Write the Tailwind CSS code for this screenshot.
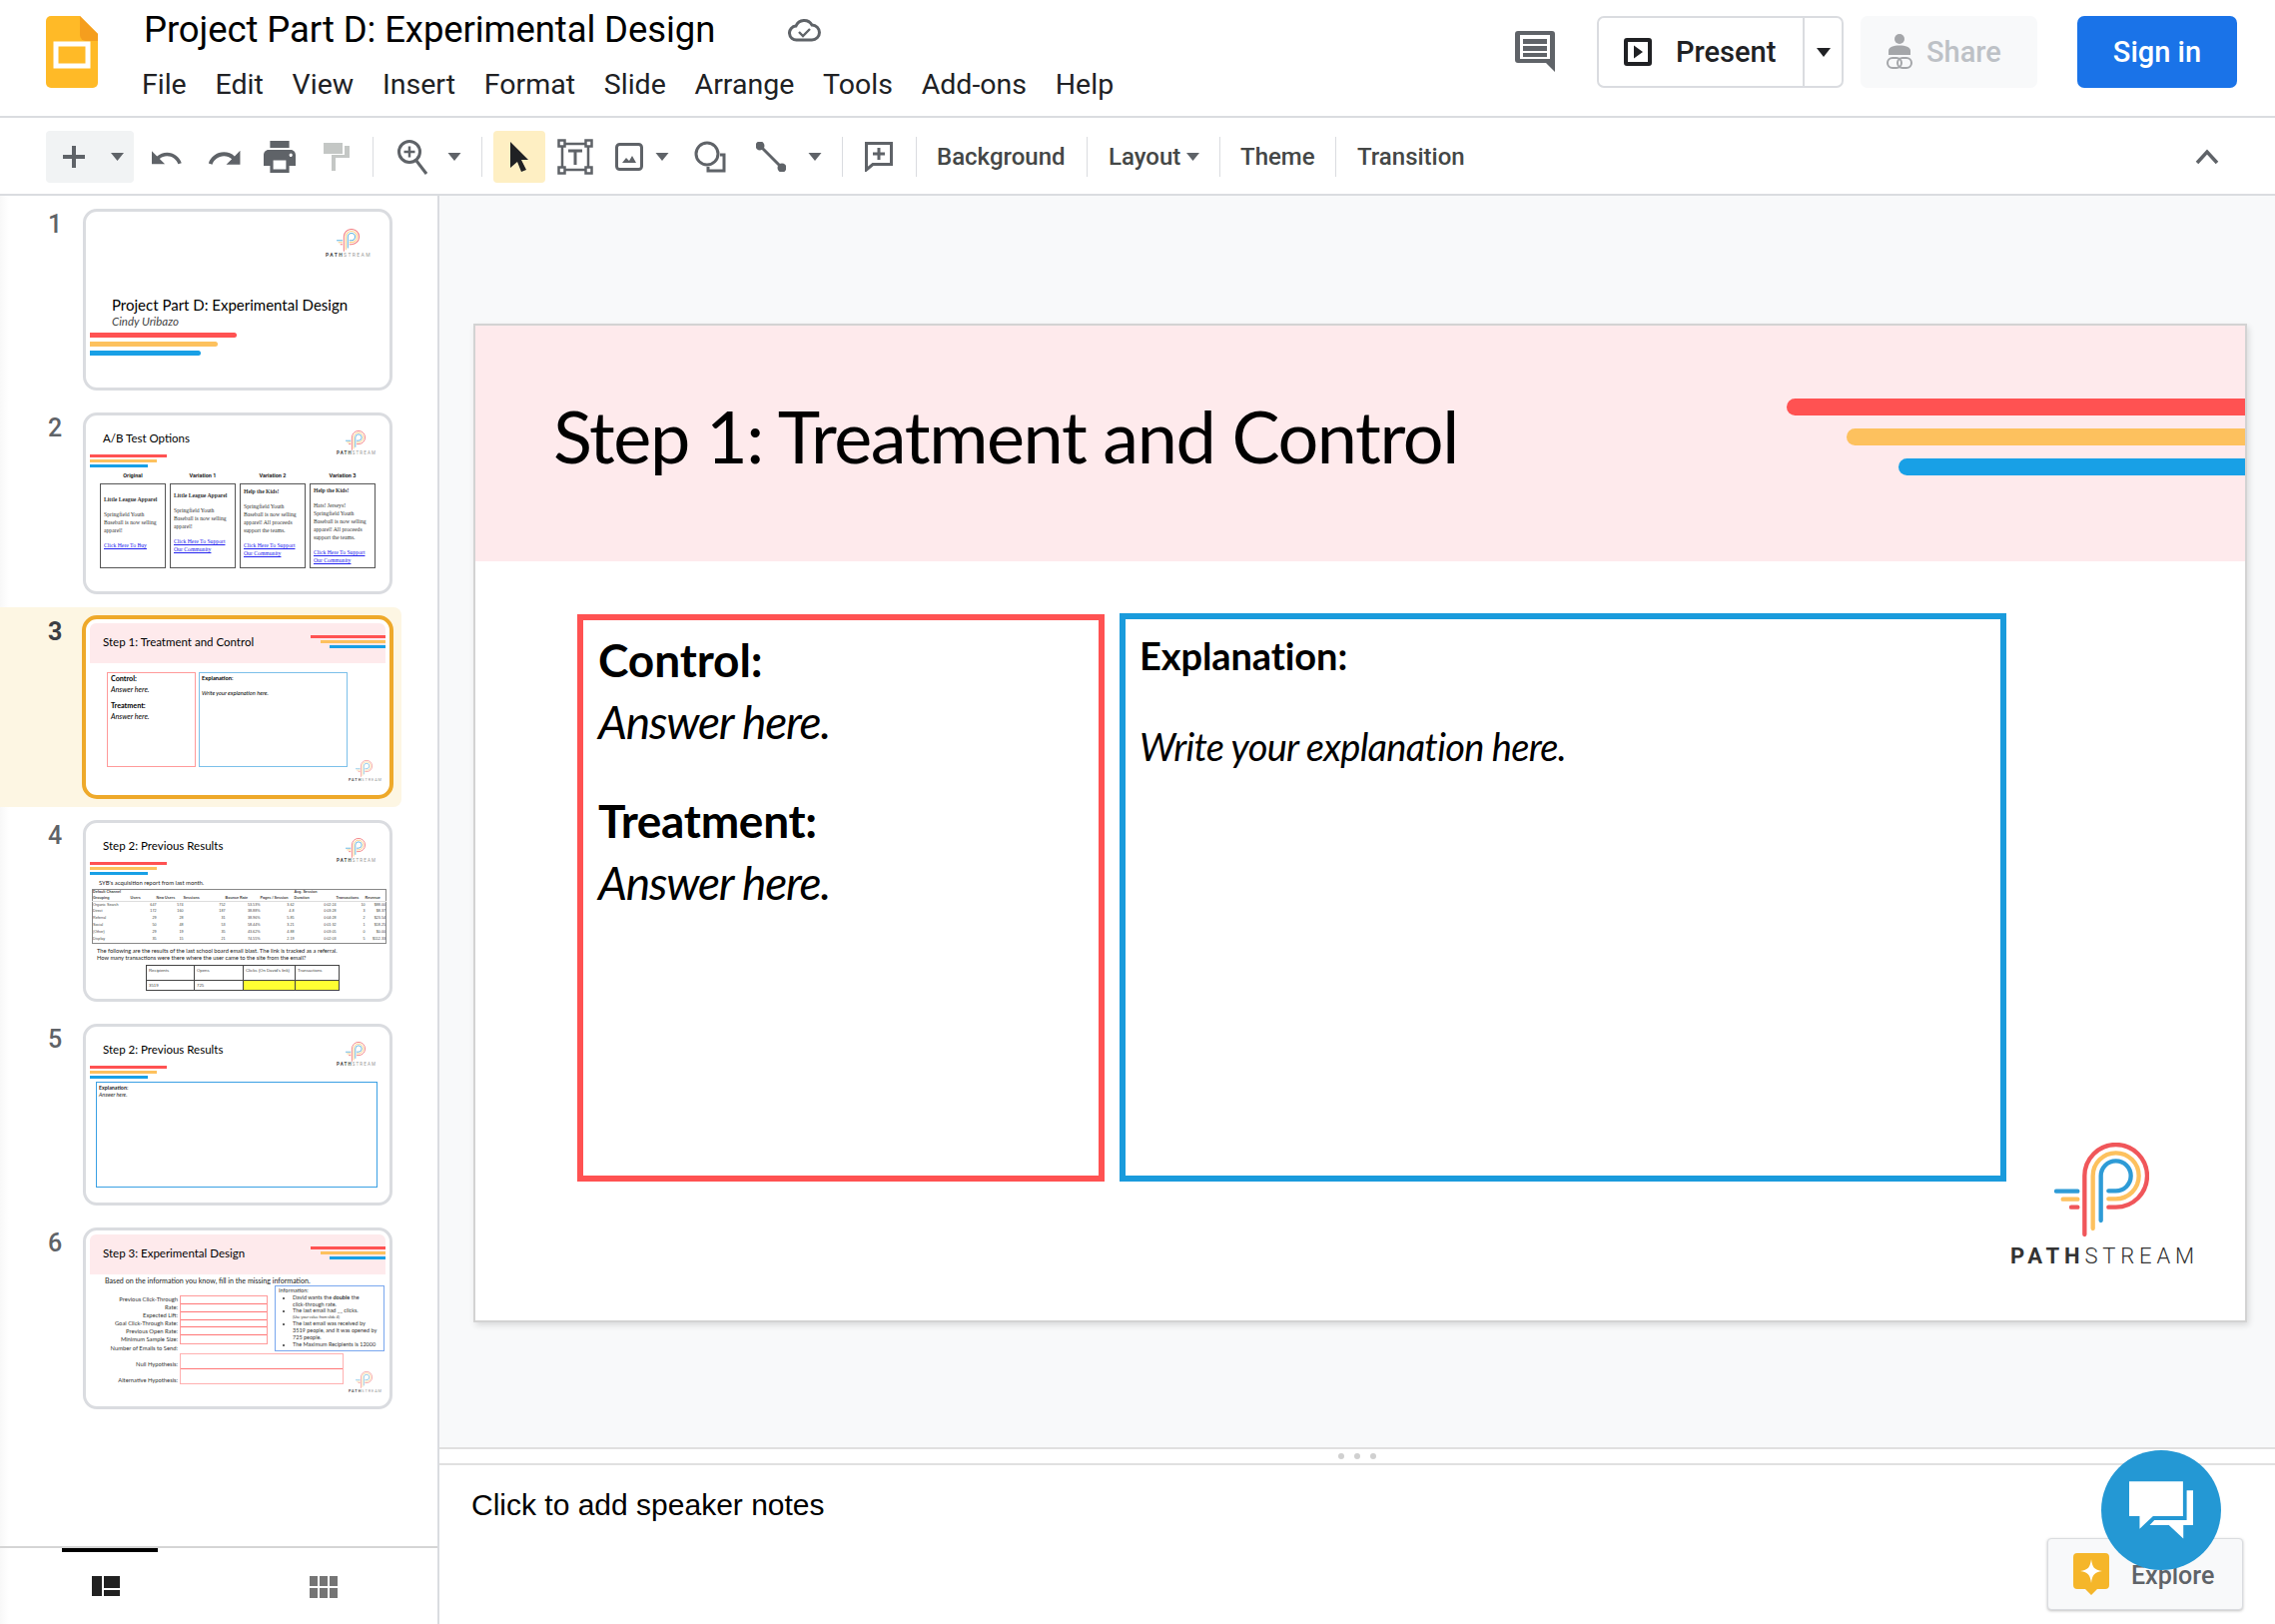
<!DOCTYPE html>
<html lang="en">
<head>
<meta charset="utf-8">
<title>Project Part D: Experimental Design</title>
<script src="https://cdn.jsdelivr.net/npm/@tailwindcss/browser@4"></script>
</head>
<body class="w-[2278px] h-[1626px] overflow-hidden bg-white font-['Roboto',sans-serif] text-[#202124] relative">
<svg class="absolute w-0 h-0">
  <defs>
    <symbol id="pm" viewBox="320 130 285 285">
      <g fill="none" stroke-width="13" stroke-linecap="round">
        <path stroke="#f0565a" d="M411 406V230A94 94 0 0 1 505 136A94 94 0 0 1 505 324H483M371 324H390"/>
        <path stroke="#fdc15e" d="M436 388V230A69 69 0 0 1 505 161A69 69 0 0 1 505 299H483M346 300H390"/>
        <path stroke="#2e9bd6" d="M460 364V230A45 45 0 0 1 505 185A45 45 0 0 1 505 275H483M326 276H390"/>
      </g>
    </symbol>
  </defs>
</svg>

<!-- HEADER -->
<header class="h-[118px] border-b-2 border-[#dadce0] flex items-start bg-white">
  <svg class="ml-[46px] mt-[16px] w-[52px] h-[72px] shrink-0" viewBox="0 0 52 72">
    <path fill="#ffba27" d="M5 0H34L52 18V67a5 5 0 0 1-5 5H5a5 5 0 0 1-5-5V5a5 5 0 0 1 5-5z"/>
    <path fill="#f59e1e" d="M34 0L52 18V25H40a6 6 0 0 1-6-6z"/>
    <rect x="10" y="28" width="32" height="22" fill="none" stroke="#fff" stroke-width="5"/>
  </svg>
  <div class="ml-[46px] flex flex-col">
    <div class="flex items-center mt-[9px] h-[42px]">
      <h1 class="text-[36.500px] leading-[42px] font-normal text-black w-[645px] whitespace-nowrap tracking-[-0.1px]">Project Part D: Experimental Design</h1>
      <svg class="w-[33px] h-[24px]" viewBox="0 0 33 24" fill="none" stroke="#5f6368" stroke-width="3"><path d="M9 22a7 7 0 0 1-1-14A9 9 0 0 1 24 7a7.5 7.5 0 0 1 0 15z"/><path stroke-width="2.4" d="M11 14l4 4 7-7"/></svg>
    </div>
    <nav class="flex gap-[28.800px] mt-[16px] text-[28.500px] leading-[36px] text-[#202124] -ml-[2px]">
      <span>File</span><span>Edit</span><span>View</span><span>Insert</span><span>Format</span><span>Slide</span><span>Arrange</span><span>Tools</span><span>Add-ons</span><span>Help</span>
    </nav>
  </div>
  <div class="ml-auto pr-[38px] pt-[16px] flex items-start">
    <svg class="mt-[15px] w-[40px] h-[41px]" viewBox="0 0 40 41"><path fill="#5f6368" d="M3 0H37a3 3 0 0 1 3 3V41L31 32H3a3 3 0 0 1-3-3V3a3 3 0 0 1 3-3z"/><path fill="#fff" d="M5 4H35V28H5z"/><path fill="#5f6368" d="M8 8H32V13H8zM8 15H32V20H8zM8 22H32V26H8z"/></svg>
    <div class="ml-[42px] w-[247px] h-[72px] border-2 border-[#dadce0] rounded-[7px] flex items-center">
      <svg class="ml-[25px] w-[28px] h-[28px]" viewBox="0 0 28 28"><path fill="#202124" fill-rule="evenodd" d="M3 0H25a3 3 0 0 1 3 3V25a3 3 0 0 1-3 3H3a3 3 0 0 1-3-3V3a3 3 0 0 1 3-3zM4 4V24H24V4zM10 7.500L19 14 10 20.500z"/></svg>
      <span class="ml-[24px] w-[103px] text-[29px] font-medium leading-none whitespace-nowrap">Present</span>
      <div class="ml-[24px] h-full border-l-2 border-[#dadce0] flex-1 flex items-center justify-center">
        <svg class="w-[14px] h-[9px]" viewBox="0 0 14 9"><path fill="#202124" d="M0 0H14L7 9z"/></svg>
      </div>
    </div>
    <div class="ml-[17px] w-[177px] h-[72px] bg-[#f8f9fa] rounded-[7px] flex items-center">
      <svg class="ml-[26px] w-[26px] h-[36px]" viewBox="0 0 26 36"><circle cx="13" cy="5" r="5" fill="#a4a6a9"/><path fill="#a4a6a9" d="M2 21V17c0-4 5-5.500 11-5.500S24 13 24 17v4z"/><g fill="none" stroke="#a4a6a9" stroke-width="2"><rect x="1" y="24" width="14" height="10" rx="5"/><rect x="11" y="24" width="14" height="10" rx="5"/></g></svg>
      <span class="ml-[14px] text-[29px] font-medium text-[#bdc1c6] leading-none">Share</span>
    </div>
    <div class="ml-[40px] w-[160px] h-[72px] bg-[#1a73e8] rounded-[7px] flex items-center justify-center text-white text-[29px] font-medium leading-none">Sign in</div>
  </div>
</header>

<!-- TOOLBAR -->
<div class="h-[78px] border-b-2 border-[#dadce0] flex items-center pl-[46px] pt-[2px] text-[#444746] shrink-0">
  <div class="w-[88px] h-[52px] bg-[#f1f3f4] rounded-[4px] flex items-center shrink-0">
    <svg class="ml-[17px] w-[22px] h-[22px]" viewBox="0 0 22 22"><path fill="#5f6368" d="M9 0h4v9h9v4h-9v9H9v-9H0V9h9z"/></svg>
    <svg class="ml-[26px] w-[13px] h-[8px]" viewBox="0 0 13 8"><path fill="#5f6368" d="M0 0H13L6.500 8z"/></svg>
  </div>
  <svg class="ml-[18px] w-[32px] h-[32px]" viewBox="2 4 22 14" preserveAspectRatio="xMidYMid meet"><path fill="#5f6368" d="M12.500 8c-2.650 0-5.050.99-6.900 2.600L2 7v9h9l-3.620-3.620c1.390-1.160 3.160-1.880 5.120-1.880 3.540 0 6.550 2.310 7.600 5.500l2.370-.78C21.080 11.030 17.150 8 12.500 8z"/></svg>
  <svg class="ml-[24px] w-[34px] h-[32px]" viewBox="1 4 22 14"><path fill="#5f6368" d="M18.400 10.600C16.550 8.990 14.150 8 11.500 8c-4.650 0-8.580 3.030-9.960 7.220L3.900 16c1.050-3.190 4.050-5.500 7.600-5.500 1.950 0 3.730.72 5.120 1.880L13 16h9V7l-3.600 3.600z"/></svg>
  <svg class="ml-[22px] w-[32px] h-[32px]" viewBox="2 3 20 18" preserveAspectRatio="none"><path fill="#5f6368" d="M19 8H5c-1.660 0-3 1.340-3 3v6h4v4h12v-4h4v-6c0-1.660-1.340-3-3-3zm-3 11H8v-5h8v5zm3-7c-.55 0-1-.45-1-1s.45-1 1-1 1 .45 1 1-.45 1-1 1zm-1-9H6v4h12V3z"/></svg>
  <svg class="ml-[28px] w-[26px] h-[28px]" viewBox="0 0 26 28"><path fill="#c4c7c5" d="M0 0H19V11H0zM21 3H26V15H12V28H8V12H21z"/></svg>
  <div class="ml-[23px] w-[1px] h-[40px] bg-[#dadce0]"></div>
  <svg class="ml-[23px] w-[32px] h-[36px]" viewBox="0 0 32 36" fill="none" stroke="#5f6368"><circle cx="13" cy="13" r="10.500" stroke-width="3"/><path stroke-width="3" d="M20 22l10 13"/><path stroke-width="2.500" d="M13 7.500v11M7.500 13h11"/></svg>
  <svg class="ml-[19px] w-[14px] h-[8px]" viewBox="0 0 13 8"><path fill="#5f6368" d="M0 0H13L6.500 8z"/></svg>
  <div class="ml-[20px] w-[1px] h-[40px] bg-[#dadce0]"></div>
  <div class="ml-[11px] w-[52px] h-[52px] bg-[#feefc3] rounded-[4px] flex items-center justify-center shrink-0">
    <svg class="w-[20px] h-[30px]" viewBox="0 0 20 30"><path fill="#202124" d="M1 0L19 18H12L17 28 12 30 8 20 1 26z"/></svg>
  </div>
  <svg class="ml-[12px] w-[36px] h-[36px]" viewBox="0 0 36 36" fill="none" stroke="#5f6368" stroke-width="2.500"><path d="M5 5H31V31H5z"/><g fill="#fff"><rect x="1.500" y="1.500" width="6" height="6"/><rect x="28.500" y="1.500" width="6" height="6"/><rect x="1.500" y="28.500" width="6" height="6"/><rect x="28.500" y="28.500" width="6" height="6"/></g><path stroke-width="3" d="M11 12H25M18 12V26"/></svg>
  <svg class="ml-[22px] w-[28px] h-[28px]" viewBox="0 0 28 28"><rect x="1.500" y="1.500" width="25" height="25" rx="3" fill="none" stroke="#5f6368" stroke-width="3"/><path fill="#5f6368" d="M7 20l4-5 3 3 3-5 4 7z"/></svg>
  <svg class="ml-[12px] w-[14px] h-[8px]" viewBox="0 0 13 8"><path fill="#5f6368" d="M0 0H13L6.500 8z"/></svg>
  <svg class="ml-[25px] w-[32px] h-[32px]" viewBox="0 0 32 32" fill="none" stroke="#5f6368" stroke-width="3"><circle cx="13" cy="13" r="11"/><path d="M26 14H30V30H14V26"/></svg>
  <svg class="ml-[30px] w-[30px] h-[30px]" viewBox="0 0 30 30" fill="none" stroke="#5f6368" stroke-width="3"><path d="M4 4L26 26"/><circle cx="4" cy="4" r="3" fill="#5f6368"/><circle cx="26" cy="26" r="3" fill="#5f6368"/></svg>
  <svg class="ml-[22px] w-[14px] h-[8px]" viewBox="0 0 13 8"><path fill="#5f6368" d="M0 0H13L6.500 8z"/></svg>
  <div class="ml-[20px] w-[1px] h-[40px] bg-[#dadce0]"></div>
  <svg class="ml-[22px] w-[28px] h-[30px]" viewBox="0 0 28 30" fill="none" stroke="#5f6368"><path stroke-width="3" d="M1.500 1.500H26.500V22.500H8L1.500 28z"/><path stroke-width="3" d="M14 6v12M8 12h12"/></svg>
  <div class="ml-[23px] w-[1px] h-[40px] bg-[#dadce0]"></div>
  <span class="ml-[20px] w-[130px] text-[24px] font-medium whitespace-nowrap">Background</span>
  <div class="ml-[20px] w-[1px] h-[40px] bg-[#dadce0]"></div>
  <span class="ml-[21px] w-[76px] text-[24px] font-medium whitespace-nowrap">Layout</span>
  <svg class="ml-[1px] w-[15px] h-[8px]" viewBox="0 0 13 8"><path fill="#5f6368" d="M0 0H13L6.500 8z"/></svg>
  <div class="ml-[19px] w-[1px] h-[40px] bg-[#dadce0]"></div>
  <span class="ml-[20px] w-[75px] text-[24px] font-medium whitespace-nowrap">Theme</span>
  <div class="ml-[20px] w-[1px] h-[40px] bg-[#dadce0]"></div>
  <span class="ml-[21px] text-[24px] font-medium whitespace-nowrap">Transition</span>
  <svg class="ml-auto mr-[56px] w-[24px] h-[16px]" viewBox="0 0 24 16" fill="none" stroke="#5f6368" stroke-width="3.500"><path d="M2 14L12 3 22 14"/></svg>
</div>

<!-- MAIN -->
<div class="flex h-[1430px]">
  <!-- SIDEBAR -->
  <aside class="w-[440px] shrink-0 border-r-2 border-[#dadce0] flex flex-col bg-gradient-to-r from-[#f8f8f8] from-0% to-white to-[2%]">
    <div class="flex-1 pt-[13px]">

      <!-- 1 -->
      <div class="h-[204px] flex items-start">
        <div class="w-[83px] pl-[48px] pt-[2px] text-[25px] leading-[28px] font-medium text-[#5f6368]">1</div>
        <div class="relative w-[310px] h-[182px] border-[3px] border-[#dadce0] rounded-[14px] bg-white overflow-hidden font-[Lato]">
          <div class="absolute left-[26px] top-[84px] text-[15px] leading-[18px] text-black whitespace-nowrap">Project Part D: Experimental Design</div>
          <div class="absolute left-[26px] top-[102px] text-[11.500px] leading-[16px] italic text-[#444] whitespace-nowrap">Cindy Uribazo</div>
          <div class="absolute left-[4px] top-[121px] w-[147px] h-[5px] rounded-r-full bg-[#ff5252]"></div>
          <div class="absolute left-[4px] top-[130px] w-[128px] h-[5px] rounded-r-full bg-[#fdc15e]"></div>
          <div class="absolute left-[4px] top-[139px] w-[111px] h-[5px] rounded-r-full bg-[#18a0e6]"></div>
          <svg class="absolute left-[251px] top-[17px] w-[23px] h-[23px] opacity-75"><use href="#pm"/></svg>
          <div class="absolute left-[240px] top-[40px] text-[5px] leading-[7px] tracking-[0.28em] text-[#999] whitespace-nowrap font-['Roboto']"><b class="text-[#444]">PATH</b>STREAM</div>
        </div>
      </div>

      <!-- 2 -->
      <div class="h-[204px] flex items-start">
        <div class="w-[83px] pl-[48px] pt-[2px] text-[25px] leading-[28px] font-medium text-[#5f6368]">2</div>
        <div class="relative w-[310px] h-[182px] border-[3px] border-[#dadce0] rounded-[14px] bg-white overflow-hidden font-[Lato]">
          <div class="absolute left-[17px] top-[15px] text-[11.500px] leading-[16px] text-black whitespace-nowrap">A/B Test Options</div>
          <div class="absolute left-[4px] top-[39px] w-[77px] h-[3px] bg-[#ff5252]"></div>
          <div class="absolute left-[4px] top-[44px] w-[67px] h-[3px] bg-[#fdc15e]"></div>
          <div class="absolute left-[4px] top-[49px] w-[58px] h-[3px] bg-[#18a0e6]"></div>
          <svg class="absolute left-[260px] top-[15px] w-[20px] h-[20px] opacity-75"><use href="#pm"/></svg>
          <div class="absolute left-[251px] top-[35px] text-[4.500px] leading-[6px] tracking-[0.25em] text-[#999] whitespace-nowrap font-['Roboto']"><b class="text-[#444]">PATH</b>STREAM</div>
          <div class="absolute left-[14px] top-[57px] w-[276px] grid grid-cols-4 gap-x-[4px] text-center text-[5.500px] leading-[7px] font-bold text-[#222] font-[Roboto]">
            <span>Original</span><span>Variation 1</span><span>Variation 2</span><span>Variation 3</span>
          </div>
          <div class="absolute left-[14px] top-[68px] w-[276px] h-[85px] grid grid-cols-4 gap-x-[4px] font-['Liberation_Serif',serif] text-[5.700px] leading-[8px] text-[#333] whitespace-nowrap">
            <div class="border border-[#555] px-[3px] pt-[11px]"><p class="font-bold">Little League Apparel</p><p class="mt-[7px]">Springfield Youth<br>Baseball is now selling<br>apparel!</p><p class="mt-[7px] text-[#2222ee] underline">Click Here To Buy</p></div>
            <div class="border border-[#555] px-[3px] pt-[7px]"><p class="font-bold">Little League Apparel</p><p class="mt-[7px]">Springfield Youth<br>Baseball is now selling<br>apparel!</p><p class="mt-[7px] text-[#2222ee] underline">Click Here To Support<br>Our Community</p></div>
            <div class="border border-[#555] px-[3px] pt-[3px]"><p class="font-bold">Help the Kids!</p><p class="mt-[7px]">Springfield Youth<br>Baseball is now selling<br>apparel! All proceeds<br>support the teams.</p><p class="mt-[7px] text-[#2222ee] underline">Click Here To Support<br>Our Community</p></div>
            <div class="border border-[#555] px-[3px] pt-[2px]"><p class="font-bold">Help the Kids!</p><p class="mt-[7px]">Hats! Jerseys!<br>Springfield Youth<br>Baseball is now selling<br>apparel! All proceeds<br>support the teams.</p><p class="mt-[7px] text-[#2222ee] underline">Click Here To Support<br>Our Community</p></div>
          </div>
        </div>
      </div>

      <!-- 3 -->
      <div class="relative h-[204px] flex items-start">
        <div class="absolute left-0 top-[-9px] w-[402px] h-[200px] bg-[#fdf6e3] rounded-r-[8px]"></div>
        <div class="relative w-[82px] pl-[48px] pt-[2px] text-[25px] leading-[28px] font-bold text-[#3c4043]">3</div>
        <div class="relative -mt-[1px] w-[312px] h-[184px] border-[4px] border-[#eea92a] rounded-[15px] bg-white overflow-hidden font-[Lato]">
          <div class="absolute left-0 top-[4px] w-[304px] h-[40px] px-[4px]"><div class="h-full bg-[#feeaec] rounded-t-[6px]"></div></div>
          <div class="absolute left-[17px] top-[15px] text-[11.500px] leading-[16px] text-black whitespace-nowrap">Step 1: Treatment and Control</div>
          <div class="absolute left-[225px] top-[16px] w-[75px] h-[3px] bg-[#ff5252]"></div>
          <div class="absolute left-[235px] top-[21px] w-[65px] h-[3px] bg-[#fdc15e]"></div>
          <div class="absolute left-[244px] top-[26px] w-[56px] h-[3px] bg-[#18a0e6]"></div>
          <div class="absolute left-[21px] top-[53px] w-[89px] h-[95px] border border-[#ff9a9a] px-[3px] pt-[1px] text-[7.200px] leading-[10.500px] text-black"><b>Control:</b><br><i>Answer here.</i><div class="h-[6px]"></div><b>Treatment:</b><br><i>Answer here.</i></div>
          <div class="absolute left-[113px] top-[53px] w-[149px] h-[95px] border border-[#7cc0ea] px-[2px] pt-[1px] text-[5.700px] leading-[8px] text-black"><b>Explanation:</b><div class="h-[7px]"></div><i>Write your explanation here.</i></div>
          <svg class="absolute left-[270px] top-[141px] w-[17px] h-[17px] opacity-60"><use href="#pm"/></svg>
          <div class="absolute left-[263px] top-[158px] text-[3.800px] leading-[6px] tracking-[0.25em] text-[#999] whitespace-nowrap font-['Roboto']"><b class="text-[#555]">PATH</b>STREAM</div>
        </div>
      </div>

      <!-- 4 -->
      <div class="h-[204px] flex items-start">
        <div class="w-[83px] pl-[48px] pt-[2px] text-[25px] leading-[28px] font-medium text-[#5f6368]">4</div>
        <div class="relative w-[310px] h-[182px] border-[3px] border-[#dadce0] rounded-[14px] bg-white overflow-hidden font-[Lato]">
          <div class="absolute left-[17px] top-[15px] text-[11.500px] leading-[16px] text-black whitespace-nowrap">Step 2: Previous Results</div>
          <div class="absolute left-[4px] top-[39px] w-[77px] h-[3px] bg-[#ff5252]"></div>
          <div class="absolute left-[4px] top-[44px] w-[67px] h-[3px] bg-[#fdc15e]"></div>
          <div class="absolute left-[4px] top-[49px] w-[58px] h-[3px] bg-[#18a0e6]"></div>
          <svg class="absolute left-[260px] top-[15px] w-[20px] h-[20px] opacity-75"><use href="#pm"/></svg>
          <div class="absolute left-[251px] top-[35px] text-[4.500px] leading-[6px] tracking-[0.25em] text-[#999] whitespace-nowrap font-['Roboto']"><b class="text-[#444]">PATH</b>STREAM</div>
          <div class="absolute left-[13px] top-[56px] text-[5.900px] leading-[8px] text-[#222] whitespace-nowrap">SYB's acquisition report from last month.</div>
          <table class="absolute left-[6px] top-[66px] w-[294px] table-fixed border-collapse border border-[#888] font-['Liberation_Sans',sans-serif] text-[3.700px] leading-[5.500px] text-[#444]">
            <colgroup><col class="w-[38px]"><col class="w-[26px]"><col class="w-[27px]"><col class="w-[42px]"><col class="w-[35px]"><col class="w-[34px]"><col class="w-[42px]"><col class="w-[29px]"><col class="w-[21px]"></colgroup>
            <tr class="h-[12px] font-bold align-bottom border-b border-[#ddd] whitespace-nowrap"><td>Default Channel<br>Grouping</td><td>Users</td><td>New Users</td><td>Sessions</td><td>Bounce Rate</td><td>Pages / Session</td><td>Avg. Session<br>Duration</td><td>Transactions</td><td>Revenue</td></tr>
            <tr class="h-[7px] text-right"><td class="text-left">Organic Search</td><td>647</td><td>574</td><td>752</td><td>53.53%</td><td>3.62</td><td>0:02:24</td><td>10</td><td>$88.00</td></tr>
            <tr class="h-[7px] text-right"><td class="text-left">Direct</td><td>172</td><td>160</td><td>187</td><td>38.88%</td><td>4.8</td><td>0:03:28</td><td>3</td><td>$8.37</td></tr>
            <tr class="h-[7px] text-right"><td class="text-left">Referral</td><td>29</td><td>28</td><td>31</td><td>38.96%</td><td>5.85</td><td>0:04:28</td><td>2</td><td>$23.54</td></tr>
            <tr class="h-[7px] text-right"><td class="text-left">Social</td><td>50</td><td>48</td><td>53</td><td>58.44%</td><td>3.21</td><td>0:01:32</td><td>1</td><td>$18.25</td></tr>
            <tr class="h-[7px] text-right"><td class="text-left">(Other)</td><td>29</td><td>19</td><td>35</td><td>43.62%</td><td>4.88</td><td>0:03:05</td><td>0</td><td>$0.00</td></tr>
            <tr class="h-[7px] text-right"><td class="text-left">Display</td><td>35</td><td>15</td><td>21</td><td>74.55%</td><td>2.19</td><td>0:02:03</td><td>5</td><td>$112.33</td></tr>
          </table>
          <div class="absolute left-[11px] top-[124px] text-[5.750px] leading-[7px] text-[#222] whitespace-nowrap">The following are the results of the last school board email blast. The link is tracked as a referral.<br>How many transactions were there where the user came to the site from the email?</div>
          <div class="absolute left-[60px] top-[142px] w-[194px] h-[26px] border border-[#444] grid grid-cols-[48px_49px_52px_1fr] grid-rows-[15px_1fr] font-['Liberation_Sans',sans-serif] text-[4.300px] leading-[5.500px] text-[#444]">
            <div class="border-r border-b border-[#444] pl-[2px] pt-[2px]">Recipients</div><div class="border-r border-b border-[#444] pl-[2px] pt-[2px]">Opens</div><div class="border-r border-b border-[#444] pl-[2px] pt-[2px]">Clicks (On David's link)</div><div class="border-b border-[#444] pl-[2px] pt-[2px]">Transactions</div>
            <div class="border-r border-[#444] pl-[2px] pt-[2px]">3519</div><div class="border-r border-[#444] pl-[2px] pt-[2px]">725</div><div class="border-r border-[#444] bg-[#ffff33]"></div><div class="bg-[#ffff33]"></div>
          </div>
        </div>
      </div>

      <!-- 5 -->
      <div class="h-[204px] flex items-start">
        <div class="w-[83px] pl-[48px] pt-[2px] text-[25px] leading-[28px] font-medium text-[#5f6368]">5</div>
        <div class="relative w-[310px] h-[182px] border-[3px] border-[#dadce0] rounded-[14px] bg-white overflow-hidden font-[Lato]">
          <div class="absolute left-[17px] top-[15px] text-[11.500px] leading-[16px] text-black whitespace-nowrap">Step 2: Previous Results</div>
          <div class="absolute left-[4px] top-[39px] w-[77px] h-[3px] bg-[#ff5252]"></div>
          <div class="absolute left-[4px] top-[44px] w-[67px] h-[3px] bg-[#fdc15e]"></div>
          <div class="absolute left-[4px] top-[49px] w-[58px] h-[3px] bg-[#18a0e6]"></div>
          <svg class="absolute left-[260px] top-[15px] w-[20px] h-[20px] opacity-75"><use href="#pm"/></svg>
          <div class="absolute left-[251px] top-[35px] text-[4.500px] leading-[6px] tracking-[0.25em] text-[#999] whitespace-nowrap font-['Roboto']"><b class="text-[#444]">PATH</b>STREAM</div>
          <div class="absolute left-[10px] top-[55px] w-[282px] h-[106px] border border-[#3aa0e4] px-[2px] pt-[2px] text-[5.300px] leading-[7px] text-[#222]"><b>Explanation:</b><br><i>Answer here.</i></div>
        </div>
      </div>

      <!-- 6 -->
      <div class="h-[204px] flex items-start">
        <div class="w-[83px] pl-[48px] pt-[2px] text-[25px] leading-[28px] font-medium text-[#5f6368]">6</div>
        <div class="relative w-[310px] h-[182px] border-[3px] border-[#dadce0] rounded-[14px] bg-white overflow-hidden font-[Lato]">
          <div class="absolute left-[4px] top-[4px] w-[296px] h-[40px] bg-[#feeaec] rounded-t-[6px]"></div>
          <div class="absolute left-[17px] top-[15px] text-[11.500px] leading-[16px] text-black whitespace-nowrap">Step 3: Experimental Design</div>
          <div class="absolute left-[225px] top-[16px] w-[75px] h-[3px] bg-[#ff5252]"></div>
          <div class="absolute left-[235px] top-[21px] w-[65px] h-[3px] bg-[#fdc15e]"></div>
          <div class="absolute left-[244px] top-[26px] w-[56px] h-[3px] bg-[#18a0e6]"></div>
          <div class="absolute left-[19px] top-[47px] text-[7.100px] leading-[8px] text-[#222] whitespace-nowrap">Based on the information you know, fill in the missing information.</div>
          <div class="absolute left-[6px] top-[65px] w-[86px] text-right text-[5.800px] leading-[8.100px] text-[#333] whitespace-nowrap">Previous Click-Through<br>Rate:<br>Expected Lift:<br>Goal Click-Through Rate:<br>Previous Open Rate:<br>Minimum Sample Size:<br>Number of Emails to Send:</div>
          <div class="absolute left-[94px] top-[65px] w-[88px] h-[49px] border border-[#ff9a9a] grid grid-rows-6 divide-y divide-[#ff7676]"><div></div><div></div><div></div><div></div><div></div><div></div></div>
          <div class="absolute left-[6px] top-[126px] w-[86px] text-right text-[5.800px] leading-[16px] text-[#333] whitespace-nowrap">Null Hypothesis:<br>Alternative Hypothesis:</div>
          <div class="absolute left-[94px] top-[123px] w-[164px] h-[31px] border border-[#ffb0b0] grid grid-rows-2 divide-y divide-[#ff7676]"><div></div><div></div></div>
          <div class="absolute left-[189px] top-[55px] w-[110px] h-[66px] border border-[#7aa7ee] bg-white pl-[3px] pt-[1px] text-[5.500px] leading-[6.800px] text-[#333] whitespace-nowrap">
            Information:
            <ul class="list-disc pl-[14px]"><li>David wants the <b>double</b> the<br>click-through rate.</li><li>The last email had __ clicks.<br><span class="text-[3.800px] leading-[6px] block">(Use your value from slide 4)</span></li><li>The last email was received by<br>3519 people, and it was opened by<br>725 people.</li><li>The Maximum Recipients is 12000</li></ul>
          </div>
          <svg class="absolute left-[270px] top-[141px] w-[17px] h-[17px] opacity-60"><use href="#pm"/></svg>
          <div class="absolute left-[263px] top-[158px] text-[3.800px] leading-[6px] tracking-[0.25em] text-[#999] whitespace-nowrap font-['Roboto']"><b class="text-[#555]">PATH</b>STREAM</div>
        </div>
      </div>
    </div>

    <!-- Sidebar tabs -->
    <div class="relative h-[78px] border-t-2 border-[#d5d5d5] flex items-start shrink-0">
      <div class="absolute left-[62px] top-0 w-[96px] h-[4px] bg-black"></div>
      <svg class="ml-[92px] mt-[28px] w-[28px] h-[20px]" viewBox="0 0 28 20"><path fill="#212121" d="M0 0H10V20H0zM12 0H28V12H12zM12 14H28V20H12z"/></svg>
      <svg class="ml-[190px] mt-[28px] w-[28px] h-[22px]" viewBox="0 0 28 22"><path fill="#757575" d="M0 0H8V10H0zM10 0H18V10H10zM20 0H28V10H20zM0 12H8V22H0zM10 12H18V22H10zM20 12H28V22H20z"/></svg>
    </div>
  </aside>

  <!-- RIGHT COLUMN -->
  <main class="flex-1 flex flex-col min-w-0">
    <div class="h-[1253px] bg-[#f8f9fa] pl-[34px] pt-[128px] shrink-0">
      <!-- SLIDE -->
      <div class="relative w-[1776px] h-[1000px] bg-white border-2 border-[#d3d3d3] shadow-[2px_3px_6px_rgba(0,0,0,0.12)] font-[Lato] text-black overflow-hidden">
        <div class="h-[236px] bg-[#feeaec]"></div>
        <div class="absolute left-[78px] top-[65px] text-[72px] leading-[90px] tracking-[-1.4px] whitespace-nowrap">Step 1: Treatment and Control</div>
        <div class="absolute left-[1313px] top-[73px] right-0 h-[17px] rounded-l-full bg-[#ff5252]"></div>
        <div class="absolute left-[1373px] top-[103px] right-0 h-[17px] rounded-l-full bg-[#fdc15e]"></div>
        <div class="absolute left-[1425px] top-[133px] right-0 h-[17px] rounded-l-full bg-[#18a0e6]"></div>
        <div class="absolute left-[102px] top-[289px] w-[528px] h-[568px] border-[6px] border-[#ff5252] pl-[15px] pt-[9px] text-[46px] leading-[62px]">
          <p class="font-bold tracking-[-0.1px]">Control:</p><p class="italic tracking-[-1.2px]">Answer here.</p><p class="font-bold tracking-[-0.3px] mt-[37px]">Treatment:</p><p class="italic tracking-[-1.2px]">Answer here.</p>
        </div>
        <div class="absolute left-[645px] top-[288px] w-[888px] h-[569px] border-[6px] border-[#1a9bdc] pl-[14px] pt-[9px] text-[38px] leading-[54px]">
          <p class="font-bold tracking-[-0.1px]">Explanation:</p><p class="italic mt-[37px] tracking-[-0.7px]">Write your explanation here.</p>
        </div>
        <svg class="absolute left-[1581px] top-[818px] w-[95px] h-[95px]"><use href="#pm"/></svg>
        <div class="absolute left-[1537px] top-[918px] text-[22px] leading-[28px] tracking-[0.22em] text-[#333] whitespace-nowrap font-['Roboto']"><b>PATH</b><span class="font-light">STREAM</span></div>
      </div>
    </div>
    <!-- Drag handle -->
    <div class="h-[18px] border-y-2 border-[#e0e0e0] flex items-center justify-center gap-[10px] shrink-0">
      <span class="w-[6px] h-[6px] rounded-full bg-[#d0d0d0]"></span><span class="w-[6px] h-[6px] rounded-full bg-[#d0d0d0]"></span><span class="w-[6px] h-[6px] rounded-full bg-[#d0d0d0]"></span>
    </div>
    <div class="flex-1 pl-[32px] pt-[22px] font-['Liberation_Sans',sans-serif] text-[30px] leading-[36px] text-black">Click to add speaker notes</div>
  </main>
</div>

<!-- Explore -->
<div class="absolute left-[2050px] top-[1540px] w-[196px] h-[72px] bg-[#f8f9fa] rounded-[4px] border border-[#dadce0] shadow-[0_1px_3px_rgba(0,0,0,0.25)] flex items-center">
  <svg class="ml-[25px] w-[36px] h-[42px]" viewBox="0 0 36 42"><path fill="#f5b62a" d="M4 0H32a4 4 0 0 1 4 4V32a4 4 0 0 1-4 4H24L18 42 12 36H4a4 4 0 0 1-4-4V4a4 4 0 0 1 4-4z"/><path fill="#fff" d="M18 6C19 14 21 17 29 18 21 19 19 22 18 30 17 22 15 19 7 18 15 17 17 14 18 6z"/></svg>
  <span class="ml-[22px] mt-[2px] text-[25px] font-medium text-[#5f6368] leading-none">Explore</span>
</div>
<!-- Chat bubble -->
<div class="absolute left-[2104px] top-[1452px] w-[120px] h-[120px] rounded-full bg-[#2498d4] flex items-center justify-center">
  <svg class="w-[64px] h-[58px]" viewBox="547 1155 190 171"><path fill="#fff" d="M547 1155H707V1258H618L578 1296V1258H547z"/><path fill="#fff" d="M718 1182H737V1285H708V1325L665 1285H608L622 1270H718z"/></svg>
</div>
</body>
</html>
